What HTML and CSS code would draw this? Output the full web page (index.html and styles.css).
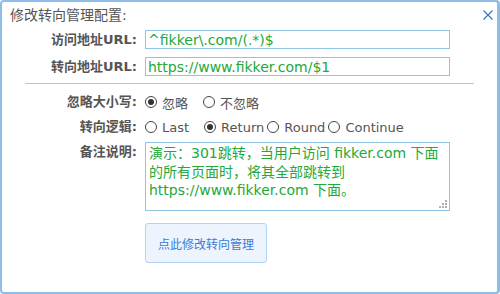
FILE: index.html
```html
<!DOCTYPE html>
<html lang="zh-CN">
<head>
    <meta charset="UTF-8">
    <meta name="viewport" content="width=device-width, initial-scale=1.0">
    <title>修改转向管理配置</title>
    <link rel="stylesheet" href="styles.css">
</head>
<body>
    <div class="dialog">
        <div class="dialog-head">修改转向管理配置:</div>
        <button class="close" title="关闭">
            <svg width="10" height="10" viewBox="0 0 10 10"><path d="M0.5 0.5 L9.5 9.5 M9.5 0.5 L0.5 9.5" stroke="#2f74c0" stroke-width="1.1" fill="none"/></svg>
        </button>

        <div class="form">
            <div class="row row-first">
                <label class="label" for="srcUrl">访问地址URL:</label>
                <input class="text-input" id="srcUrl" type="text" value="^fikker\.com/(.*)$">
            </div>
            <div class="row row-input">
                <label class="label" for="dstUrl">转向地址URL:</label>
                <input class="text-input" id="dstUrl" type="text" value="https://www.fikker.com/$1">
            </div>

            <hr class="divider">

            <div class="row row-opt row-case">
                <span class="label">忽略大小写:</span>
                <div class="options">
                    <label class="option option-wide"><span class="radio checked"></span>忽略</label>
                    <label class="option"><span class="radio"></span>不忽略</label>
                </div>
            </div>
            <div class="row row-opt row-logic">
                <span class="label">转向逻辑:</span>
                <div class="options">
                    <label class="option option-wide"><span class="radio"></span>Last</label>
                    <label class="option"><span class="radio checked"></span>Return</label>
                    <label class="option"><span class="radio"></span>Round</label>
                    <label class="option"><span class="radio"></span>Continue</label>
                </div>
            </div>

            <div class="row row-note">
                <label class="label" for="note">备注说明:</label>
                <div class="note-wrap">
                    <textarea class="note" id="note">演示：301跳转，当用户访问 fikker.com 下面
的所有页面时，将其全部跳转到
https://www.fikker.com 下面。</textarea>
                </div>
            </div>

            <div class="row row-submit">
                <span></span>
                <div><button class="submit">点此修改转向管理</button></div>
            </div>
        </div>
    </div>
</body>
</html>
```

FILE: styles.css
```css
body {
    margin: 0;
    padding: 0;
    font-family: "DejaVu Sans", "Noto Sans CJK SC", sans-serif;
    background: #fff;
}

.dialog {
    position: relative;
    width: 500px;
    height: 294px;
    box-sizing: border-box;
    border: 2px solid #8dbde9;
    border-right-width: 3px;
    border-radius: 4px;
    background: #fff;
}

.dialog-head {
    height: 28px;
    line-height: 26px;
    padding-left: 8px;
    font-size: 14px;
    color: #555;
}

.close {
    position: absolute;
    top: 7px;
    right: 3px;
    width: 12px;
    height: 12px;
    padding: 0;
    border: none;
    background: none;
    cursor: pointer;
    display: flex;
    align-items: center;
    justify-content: center;
}

.form {
    display: flex;
    flex-direction: column;
}

.row {
    display: grid;
    grid-template-columns: 135px 305px;
    column-gap: 8px;
}

.label {
    text-align: right;
    font-size: 13px;
    font-weight: bold;
    color: #555;
    line-height: 19px;
}

.row-input {
    margin-top: 8px;
}

.text-input {
    height: 19px;
    box-sizing: border-box;
    border: 1px solid #8fc4e4;
    padding: 0 2px;
    font-family: inherit;
    font-size: 14px;
    color: #23a83a;
    outline: none;
}

.divider {
    margin: 7px 23px 0;
    height: 1px;
    border: none;
    background: #a9cbe5;
}

.row-opt .label {
    line-height: 22px;
}

.row-case {
    margin-top: 7px;
}

.row-logic {
    margin-top: 3px;
}

.options {
    display: flex;
    align-items: center;
    height: 22px;
}

.option {
    display: flex;
    align-items: center;
    gap: 5px;
    margin-right: 3px;
    font-size: 13px;
    color: #555;
    cursor: pointer;
}

.option-wide {
    margin-right: 15px;
}

.radio {
    position: relative;
    width: 12px;
    height: 12px;
    box-sizing: border-box;
    border: 1px solid #444;
    border-radius: 50%;
    background: #fff;
}

.radio.checked::after {
    content: "";
    position: absolute;
    top: 2px;
    left: 2px;
    width: 6px;
    height: 6px;
    border-radius: 50%;
    background: #333;
}

.row-note {
    margin-top: 4px;
}

.row-note .label {
    line-height: 20px;
}

.note-wrap {
    position: relative;
    height: 69px;
}

/* ручка изменения размера — точками, как в оригинале */
.note-wrap::after {
    content: "";
    position: absolute;
    right: 9px;
    bottom: 9px;
    width: 2px;
    height: 2px;
    background: #b0b0b0;
    box-shadow: 0 3px 0 #b0b0b0, 0 6px 0 #b0b0b0, -3px 3px 0 #b0b0b0, -3px 6px 0 #b0b0b0, -6px 6px 0 #b0b0b0;
    transform: translate(6px, 0);
}

.note {
    display: block;
    width: 100%;
    height: 69px;
    box-sizing: border-box;
    border: 1px solid #8fc4e4;
    padding: 1px 3px;
    font-family: inherit;
    font-size: 14px;
    line-height: 18.5px;
    color: #23a83a;
    resize: none;
    outline: none;
    overflow: hidden;
}

.row-submit {
    margin-top: 12px;
}

.submit {
    width: 122px;
    height: 40px;
    border: 1px solid #b1d3f2;
    border-radius: 3px;
    background: #eef4fd;
    color: #3a7bd5;
    font-family: inherit;
    font-size: 12px;
    cursor: pointer;
}
```
